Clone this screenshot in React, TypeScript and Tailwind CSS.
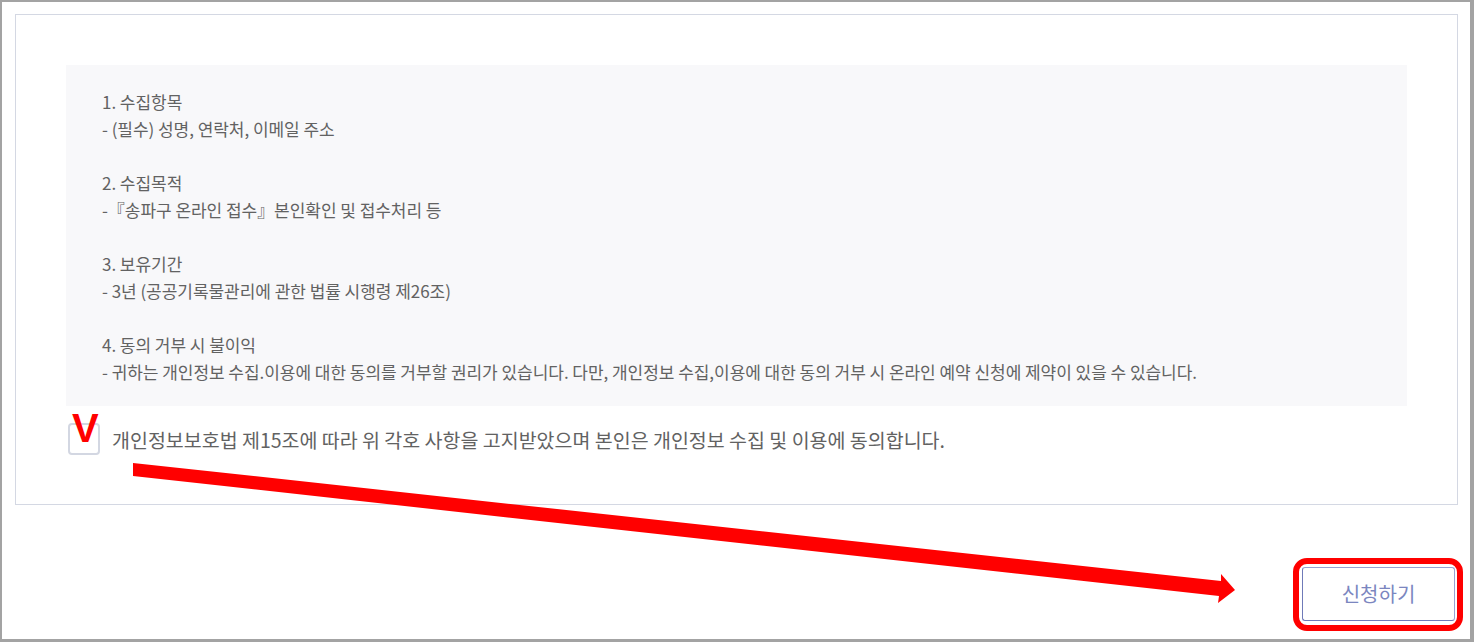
const terms: { title: string; body: string }[] = [
  { title: "1. 수집항목", body: "- (필수) 성명, 연락처, 이메일 주소" },
  { title: "2. 수집목적", body: "-『송파구 온라인 접수』본인확인 및 접수처리 등" },
  { title: "3. 보유기간", body: "- 3년 (공공기록물관리에 관한 법률 시행령 제26조)" },
  {
    title: "4. 동의 거부 시 불이익",
    body: "- 귀하는 개인정보 수집.이용에 대한 동의를 거부할 권리가 있습니다. 다만, 개인정보 수집,이용에 대한 동의 거부 시 온라인 예약 신청에 제약이 있을 수 있습니다.",
  },
];

const font = { fontFamily: '"Noto Sans CJK KR", "Noto Sans", sans-serif' };

export default function App() {
  return (
    <div
      className="relative w-[1474px] h-[642px] bg-white border-t-2 border-l-2 border-r-4 border-b-[3px] border-[#a3a3a3] overflow-hidden"
      style={font}
    >
      {/* Consent panel */}
      <div className="mt-[12px] ml-[13px] mr-[12px] border border-[#d4d8e3] p-[50px] pb-[49px]">
        <div className="bg-[#f8f8fa] pt-[23px] pb-[21px] px-[36px] text-[17px] leading-[27px] text-[#626262] tracking-[-0.04px]">
          {terms.map((t, i) => (
            <div key={t.title}>
              {i > 0 && <div className="h-[27px]" />}
              <p>{t.title}</p>
              <p>{t.body}</p>
            </div>
          ))}
        </div>

        <label className="mt-[17px] flex items-center gap-[12px] pl-[2px]">
          <span className="relative block w-[32px] h-[32px] rounded-[4px] border-2 border-[#d3d7e2] bg-white">
            <span
              className="absolute left-[2px] top-[-17px] text-[40px] leading-none font-bold text-[#ff0000]"
              style={{ fontFamily: '"Liberation Sans", Arial, sans-serif' }}
            >
              V
            </span>
          </span>
          <span className="text-[19.5px] text-[#626262] pt-[2px]">
            개인정보보호법 제15조에 따라 위 각호 사항을 고지받았으며 본인은 개인정보 수집 및 이용에 동의합니다.
          </span>
        </label>
      </div>

      {/* Submit */}
      <div className="flex justify-end pr-[15px] mt-[62px]">
        <div className="relative">
          <button className="w-[153px] h-[54px] rounded-[3px] border border-[#97a1d2] border-l-[#6f7ab8] border-b-[#6f7ab8] bg-white text-[20px] text-[#7b86bf]">
            신청하기
          </button>
          <span className="pointer-events-none absolute -left-[9px] -top-[9px] -right-[8px] -bottom-[10px] rounded-[14px] border-[6px] border-[#ff0000]" />
        </div>
      </div>

      {/* Annotation arrow */}
      <svg
        className="pointer-events-none absolute left-[-2px] top-[-2px]"
        width="1474"
        height="642"
        viewBox="0 0 1474 642"
      >
        <polygon
          fill="#ff0000"
          points="133,463 1221,581 1221,574 1235,590 1218,603 1219,596 133,476"
        />
      </svg>
    </div>
  );
}
